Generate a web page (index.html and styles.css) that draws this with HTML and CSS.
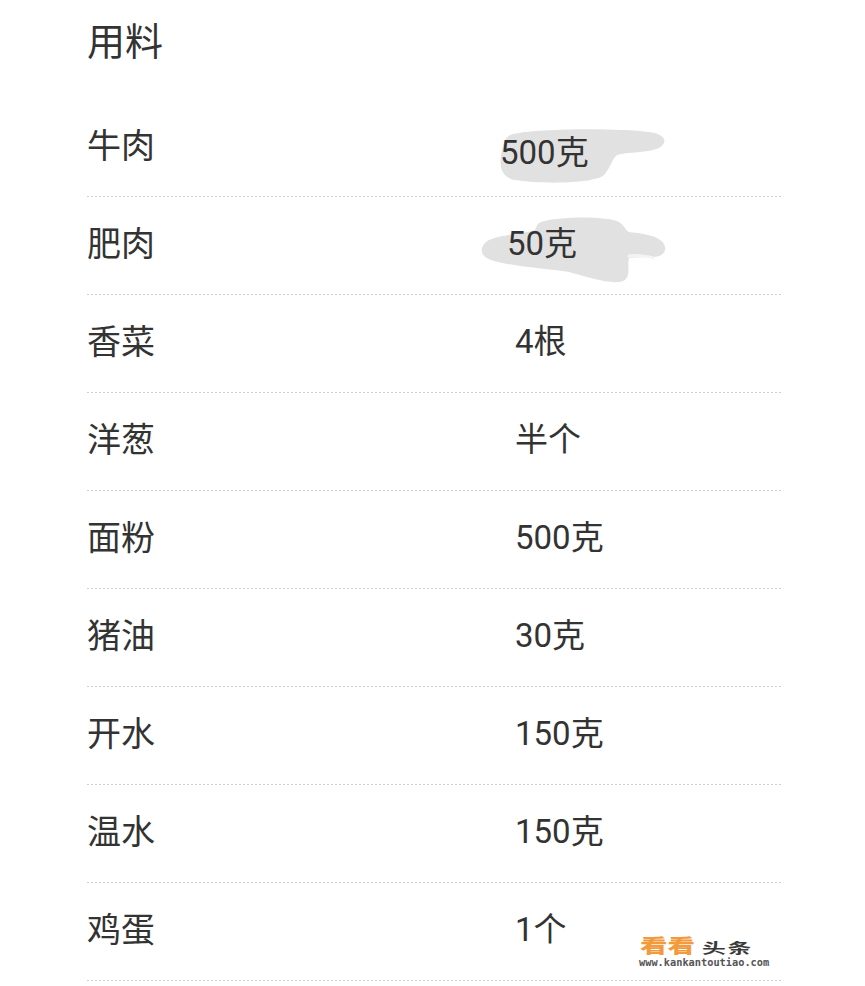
FILE: index.html
```html
<!DOCTYPE html>
<html lang="zh-CN">
<head>
<meta charset="utf-8">
<title>用料</title>
<link rel="stylesheet" href="styles.css">
</head>
<body>
<main class="recipe">
  <h2 class="title">用料</h2>
  <ul class="list">
    <li class="row">
      <svg class="blot blot--one" width="170" height="60" viewBox="0 0 170 60" aria-hidden="true">
        <path d="M14 6 C40 0 120 0 150 4 C166 6 170 14 160 20 C150 25 128 24 118 27 C112 32 112 40 104 48 C90 56 40 56 16 52 C4 50 0 40 2 28 C4 16 6 8 14 6 Z" fill="#e1e1e1"/>
      </svg>
      <span class="name">牛肉</span><span class="amount amount--shift1">500克</span>
    </li>
    <li class="row">
      <svg class="blot blot--two" width="200" height="70" viewBox="0 0 200 70" aria-hidden="true">
        <path d="M62 6 C80 0 130 0 140 6 C146 10 146 14 150 16 C170 18 188 22 186 34 C184 44 168 40 150 42 C148 50 152 58 146 64 C136 70 112 62 90 56 C60 52 30 50 12 44 C0 40 0 30 10 24 C24 18 46 18 56 14 C58 10 58 8 62 6 Z" fill="#e1e1e1"/>
        <path d="M150 40 C158 39 170 40 174 42" stroke="#f4f4f4" stroke-width="3" fill="none" stroke-linecap="round"/>
      </svg>
      <span class="name">肥肉</span><span class="amount amount--shift2">50克</span>
    </li>
    <li class="row"><span class="name">香菜</span><span class="amount">4根</span></li>
    <li class="row"><span class="name">洋葱</span><span class="amount">半个</span></li>
    <li class="row"><span class="name">面粉</span><span class="amount">500克</span></li>
    <li class="row"><span class="name">猪油</span><span class="amount">30克</span></li>
    <li class="row"><span class="name">开水</span><span class="amount">150克</span></li>
    <li class="row"><span class="name">温水</span><span class="amount">150克</span></li>
    <li class="row"><span class="name">鸡蛋</span><span class="amount">1个</span></li>
  </ul>
</main>
<div class="watermark">
  <div class="wm-logo"><span class="wm-orange">看看</span><span class="wm-dark">头条</span></div>
  <div class="wm-url">www.kankantoutiao.com</div>
</div>
</body>
</html>
```

FILE: styles.css
```css
html, body {
  margin: 0;
  padding: 0;
  background: #ffffff;
}

body {
  width: 865px;
  height: 986px;
  overflow: hidden;
  position: relative;
  font-family: Roboto, "Noto Sans CJK SC", sans-serif;
  color: #333333;
}

.recipe {
  padding-left: 87px;
  width: 695px;
}

.title {
  margin: 0;
  height: 99px;
  box-sizing: border-box;
  padding-top: 16px;
  font-size: 38px;
  font-weight: 400;
  line-height: 52px;
  color: #333333;
}

.list {
  list-style: none;
  margin: 0;
  padding: 0;
}

.row {
  position: relative;
  height: 98px;
  display: flex;
  align-items: center;
  padding-bottom: 4px;
  box-sizing: border-box;
  background-image: repeating-linear-gradient(90deg, #cfcfcf 0 2px, transparent 2px 4px);
  background-size: 100% 1px;
  background-position: left bottom;
  background-repeat: no-repeat;
  font-size: 34px;
  line-height: 44px;
}

.name {
  width: 428px;
  flex: none;
}

.amount {
  position: relative;
  z-index: 1;
  font-size: 33px;
}

.amount--shift1 {
  margin-left: -15px;
  margin-top: 14px;
}

.amount--shift2 {
  margin-left: -8px;
}

.blot {
  position: absolute;
  z-index: 0;
}

.blot--one {
  left: 412px;
  top: 29px;
}

.blot--two {
  left: 392px;
  top: 19px;
}

.watermark {
  position: absolute;
  left: 639px;
  top: 934px;
}

.wm-logo {
  display: flex;
  align-items: flex-end;
  height: 20px;
}

.wm-orange {
  display: inline-block;
  font-family: "Noto Sans CJK SC", sans-serif;
  font-weight: 900;
  font-size: 19px;
  line-height: 19px;
  color: #f39a3c;
  margin-left: 1px;
  transform: scaleX(1.45);
  transform-origin: left bottom;
}

.wm-dark {
  display: inline-block;
  font-family: "Noto Sans CJK SC", sans-serif;
  font-weight: 700;
  font-size: 14px;
  line-height: 14px;
  color: #3a3a3a;
  margin-left: 24px;
  letter-spacing: 1px;
  transform: scaleX(1.7);
  transform-origin: left bottom;
}

.wm-url {
  font-family: "DejaVu Sans Mono", monospace;
  font-weight: 700;
  font-size: 10.3px;
  line-height: 10px;
  margin-top: 3px;
  color: #555555;
}
```
